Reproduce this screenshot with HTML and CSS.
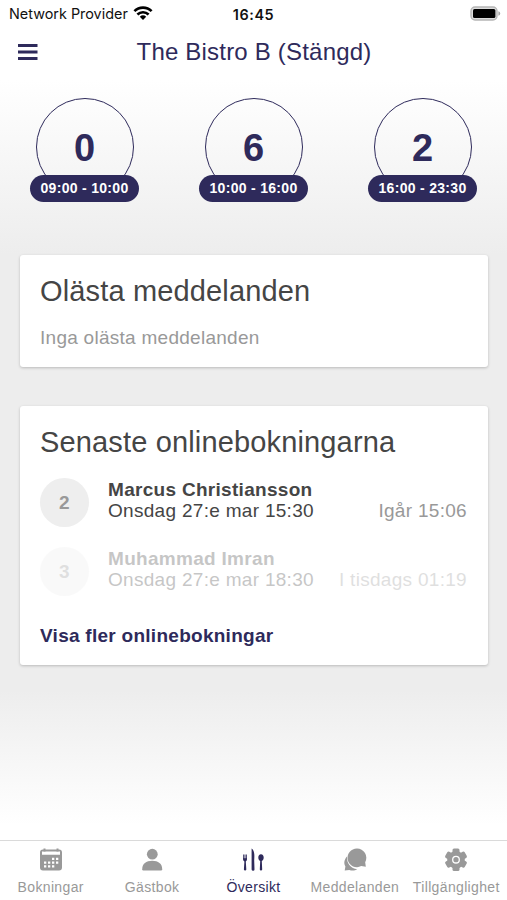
FILE: index.html
```html
<!DOCTYPE html>
<html lang="sv">
<head>
    <meta charset="UTF-8">
    <meta name="viewport" content="width=device-width, initial-scale=1.0">
    <title>The Bistro B</title>
    <link rel="stylesheet" href="styles.css">
</head>
<body>
    <div class="app">
        <div class="status-bar">
            <div class="carrier">
                <span>Network Provider</span>
                <svg class="wifi" viewBox="0 0 20 14" width="20" height="14">
                    <path d="M1.400 5.200a12.200 12.200 0 0 1 17.200 0M4.400 8.500a8 8 0 0 1 11.200 0" fill="none" stroke="#000" stroke-width="2.600"/>
                    <path d="M6.800 10.700a4.700 4.700 0 0 1 6.400 0L10 14z"/>
                </svg>
            </div>
            <div class="clock">16:45</div>
            <svg class="battery" viewBox="0 0 31 15" width="31" height="15">
                <rect x="1" y="1" width="26" height="13" rx="4" fill="#ddd" stroke="#b5b5b5" stroke-width="1.400"/>
                <rect x="3" y="3" width="22.400" height="9" rx="1.500"/>
                <path d="M28.400 5.200q1.800.6 1.800 2.300t-1.800 2.300z" fill="#a5a5a5"/>
            </svg>
        </div>

        <header class="header">
            <svg class="menu-icon" viewBox="0 0 20 16" width="20" height="16">
                <path d="M0 1.500h19.500M0 8h19.500M0 14.500h19.500" stroke="#2e2a5b" stroke-width="2.800"/>
            </svg>
            <h1>The Bistro B (Stängd)</h1>
        </header>

        <div class="slots">
            <div class="slot">
                <div class="slot-circle">0</div>
                <div class="slot-time">09:00 - 10:00</div>
            </div>
            <div class="slot">
                <div class="slot-circle">6</div>
                <div class="slot-time">10:00 - 16:00</div>
            </div>
            <div class="slot">
                <div class="slot-circle">2</div>
                <div class="slot-time">16:00 - 23:30</div>
            </div>
        </div>

        <section class="card messages">
            <h2 class="messages-title">Olästa meddelanden</h2>
            <p class="empty">Inga olästa meddelanden</p>
        </section>

        <section class="card bookings">
            <h2 class="bookings-title">Senaste onlinebokningarna</h2>
            <div class="booking">
                <div class="guests">2</div>
                <div class="booking-info">
                    <div class="name">Marcus Christiansson</div>
                    <div class="booking-row">
                        <span class="date">Onsdag 27:e mar 15:30</span>
                        <span class="created">Igår 15:06</span>
                    </div>
                </div>
            </div>
            <div class="booking faded">
                <div class="guests">3</div>
                <div class="booking-info">
                    <div class="name">Muhammad Imran</div>
                    <div class="booking-row">
                        <span class="date">Onsdag 27:e mar 18:30</span>
                        <span class="created">I tisdags 01:19</span>
                    </div>
                </div>
            </div>
            <a class="more">Visa fler onlinebokningar</a>
        </section>

        <nav class="tabs">
            <div class="tab">
                <svg viewBox="0 0 24 24" width="24" height="24">
                    <path d="M5.500.5v3M18.500.5v3" stroke="#999" stroke-width="2"/>
                    <path fill="#999" fill-rule="evenodd" d="M4 1.500h16a3 3 0 0 1 3 3V19.500a3 3 0 0 1-3 3H4a3 3 0 0 1-3-3V4.500a3 3 0 0 1 3-3zM3 3.500h18v3.200H3z"/>
                    <path stroke="#fff" stroke-width="2.200" stroke-dasharray="2.300 1.700" d="M13 10.800h6.800M5 14.600h14.800M5 18.400h10.800"/>
                </svg>
                <span>Bokningar</span>
            </div>
            <div class="tab">
                <svg viewBox="0 0 24 24" width="24" height="24" fill="#999">
                    <circle cx="12.300" cy="6.200" r="5.400"/>
                    <path d="M2.200 21.200c0-5.400 4-8.400 10-8.400s10 3 10 8.400q0 1.200-1.200 1.200H3.400q-1.200 0-1.200-1.200z"/>
                </svg>
                <span>Gästbok</span>
            </div>
            <div class="tab active">
                <svg viewBox="0 0 24 24" width="24" height="24" fill="#2e2a5b">
                    <path d="M2 6.500h.8v3.800h.7V6.500h1v3.800h.7V6.500H6v4.800q0 1.600-1.200 2.200l.5 8q0 1-1.200 1t-1.200-1l.5-8Q2 12.900 2 11.300z"/>
                    <path d="M10.600.6c2.700 1.900 3.200 5.900 2.600 11.900l.3 9q0 1.300-1.400 1.300t-1.500-1.300z"/>
                    <path d="M20 6.200c1.700 0 2.700 1.500 2.700 3.400 0 1.700-.8 2.900-1.900 3.400l.4 8.400q0 1.100-1.200 1.100t-1.200-1.100l.4-8.400c-1.100-.5-1.900-1.700-1.900-3.400 0-1.900 1-3.400 2.700-3.400z"/>
                </svg>
                <span>Översikt</span>
            </div>
            <div class="tab">
                <svg viewBox="0 0 24 24" width="24" height="24" fill="#999">
                    <path d="M4 8.500C.8 12 .8 15.700 2.400 18.400L1.700 22.500l4.600-.6c2.800 1.200 5.700.8 7.900-.7C8 20.500 3.600 15.600 4 8.500z"/>
                    <path d="M14 .6a9.200 9.200 0 0 1 8.200 13.600l.6 4.500-4.600-.6A9.300 9.300 0 1 1 14 .6z"/>
                </svg>
                <span>Meddelanden</span>
            </div>
            <div class="tab">
                <svg viewBox="0 0 24 24" width="24" height="24">
                    <g fill="#999">
                        <circle cx="12" cy="11.700" r="8.800"/>
                        <rect x="8.500" y=".5" width="7" height="22.400" rx="1.500"/>
                        <rect x="8.500" y=".5" width="7" height="22.400" rx="1.500" transform="rotate(60 12 11.700)"/>
                        <rect x="8.500" y=".5" width="7" height="22.400" rx="1.500" transform="rotate(120 12 11.700)"/>
                    </g>
                    <circle cx="12" cy="11.700" r="3.300" fill="#999" stroke="#fff" stroke-width="1.300"/>
                </svg>
                <span>Tillgänglighet</span>
            </div>
        </nav>
    </div>
</body>
</html>
```
FILE: styles.css
```css
* {
    box-sizing: border-box;
}

body {
    margin: 0;
    font-family: "Liberation Sans", Arial, sans-serif;
    color: #454545;
}

h1,
h2,
p {
    margin: 0;
    font-weight: normal;
}

.app {
    display: flex;
    flex-direction: column;
    height: 900px;
    background: linear-gradient(#fff 80px, #ededed 255px, #ededed 690px, #fff 825px);
}

/* status bar */
.status-bar {
    display: grid;
    grid-template-columns: 1fr auto 1fr;
    align-items: center;
    height: 28px;
    padding: 0 6px 0 9px;
    color: #111;
    font-family: Inter, sans-serif;
    font-size: 14.4px;
}

.carrier {
    display: flex;
    align-items: center;
    gap: 5px;
    height: 20px;
    margin-top: -2px;
}

.clock {
    margin-right: 3px;
    font-weight: 600;
    letter-spacing: 0.6px;
}

.battery {
    justify-self: end;
    margin-top: -2px;
}

/* header */
.header {
    display: grid;
    grid-template-columns: 20px 1fr 20px;
    align-items: center;
    height: 48px;
    padding: 0 17px 0 18px;
}

.header h1 {
    color: #2e2a5b;
    font-size: 24px;
    letter-spacing: 0.2px;
    text-align: center;
}

/* time slots */
.slots {
    display: flex;
    height: 179px;
    padding-top: 22px;
}

.slot {
    display: flex;
    flex: 1;
    flex-direction: column;
    align-items: center;
}

.slot-circle {
    width: 98px;
    height: 98px;
    border: 1.5px solid #2e2a5b;
    border-radius: 50%;
    color: #2e2a5b;
    font-size: 38px;
    font-weight: bold;
    line-height: 98px;
    text-align: center;
}

.slot-time {
    z-index: 1;
    width: 109px;
    height: 27px;
    margin-top: -21px;
    border-radius: 14px;
    background: #2e2a5b;
    color: #fff;
    font-size: 14px;
    font-weight: bold;
    letter-spacing: 0.3px;
    line-height: 27px;
    text-align: center;
    white-space: nowrap;
}

/* cards */
.card {
    margin: 0 19px 0 20px;
    padding: 0 21px 0 20px;
    border-radius: 3px;
    background: #fff;
    box-shadow: 0 1px 3px rgba(0, 0, 0, 0.22);
}

.card h2 {
    font-size: 29px;
    letter-spacing: 0.15px;
    line-height: 34px;
    white-space: nowrap;
}

.messages {
    height: 112px;
    padding-top: 19px;
}

.empty {
    margin-top: 19px;
    color: #999;
    font-size: 19px;
    letter-spacing: 0.27px;
    line-height: 22px;
}

.bookings {
    height: 259px;
    margin-top: 39px;
    padding-top: 19px;
}

.booking {
    display: flex;
    align-items: center;
    height: 49px;
    margin-top: 20px;
    font-size: 19px;
    letter-spacing: 0.3px;
    line-height: 21px;
}

.guests {
    width: 49px;
    height: 49px;
    margin-right: 19px;
    border-radius: 50%;
    background: #eee;
    color: #999;
    font-weight: bold;
    line-height: 49px;
    text-align: center;
}

.booking-info {
    flex: 1;
    padding-bottom: 5px;
}

.name {
    font-weight: bold;
}

.booking-row {
    display: flex;
    justify-content: space-between;
    white-space: nowrap;
}

.created {
    color: #999;
}

.faded {
    opacity: 0.3;
}

.bookings-title + .booking {
    margin-top: 19px;
}

.more {
    display: block;
    margin-top: 29px;
    color: #2e2a5b;
    font-size: 19px;
    font-weight: bold;
    letter-spacing: 0.27px;
    line-height: 22px;
}

/* bottom tabs */
.tabs {
    display: grid;
    grid-template-columns: repeat(5, 1fr);
    height: 60px;
    margin-top: auto;
    border-top: 1px solid #dadada;
    background: #fff;
}

.tab {
    display: flex;
    flex-direction: column;
    align-items: center;
    padding-top: 7px;
    color: #999;
    font-size: 14px;
    letter-spacing: 0.35px;
    white-space: nowrap;
}

.tab span {
    margin-top: 7px;
    line-height: 16px;
}

.active {
    color: #2e2a5b;
}
```
